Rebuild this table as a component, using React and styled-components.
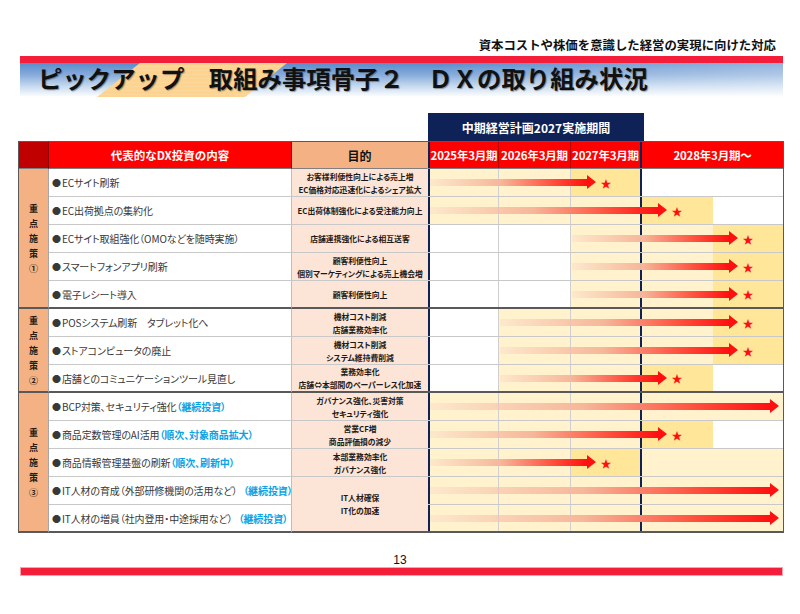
import React from 'react';
import styled, { createGlobalStyle } from 'styled-components';

const GlobalStyle = createGlobalStyle`
  html, body {
    margin: 0;
    padding: 0;
    background: #fff;
  }
  body {
    font-family: "Noto Sans CJK JP", "Noto Sans", sans-serif;
  }
`;

const NAVY = '#0f2257';
const GROUP_LINE = '#595959';

const Page = styled.div`
  width: 800px;
  height: 614px;
  overflow: hidden;
  background: #fff;
`;

const Subtitle = styled.div`
  margin: 37px 24px 0 0;
  text-align: right;
  font-size: 12.4px;
  font-weight: 700;
  line-height: 16px;
  color: #111;
`;

const RedBar = styled.div`
  margin: ${(p) => p.$top || 0}px 17px 0 20px;
  height: ${(p) => p.$h}px;
  box-sizing: border-box;
  background: #f41e3b;
  border: 1px solid ${(p) => (p.$soft ? '#f9a3ae' : '#f41e3b')};
`;

const TitleBand = styled.div`
  position: relative;
  margin: 0 17px 0 20px;
  height: 34px;
  background:
    linear-gradient(90deg, rgba(255, 255, 255, 0) 55%, rgba(255, 255, 255, 0.35) 100%),
    linear-gradient(180deg, #5a8bcb 0%, #86acdb 35%, #c9dcf0 70%, #ffffff 100%);
`;

const Stripe = styled.div`
  position: absolute;
  top: 0;
  bottom: 0;
  left: 77px;
  width: 190px;
  background: repeating-linear-gradient(180deg, #fdd38f 0px, #fdd38f 3px, #fcdca6 4px);
  clip-path: polygon(43px 0, 190px 0, 148px 100%, 0 100%);
`;

const Title = styled.h1`
  position: relative;
  margin: 0;
  padding-left: 18px;
  font-size: 24.4px;
  font-weight: 700;
  line-height: 30px;
  color: #111;
  white-space: nowrap;
  text-shadow: 1px 1px 1px rgba(0, 0, 0, 0.35);
`;

const PeriodBox = styled.div`
  margin: 16px 0 0 428px;
  width: 216px;
  height: 28px;
  display: flex;
  align-items: center;
  justify-content: center;
  background: ${NAVY};
  color: #fff;
  font-size: 12px;
  font-weight: 700;
`;

const Table = styled.div`
  margin-left: 18px;
  display: grid;
  grid-template-columns: 30px 243px 136px 355px;
  grid-template-rows: 27px repeat(13, 28px);
  border: 1px solid ${GROUP_LINE};
  border-bottom: none;
  width: 764px;
`;

const HeadCell = styled.div`
  box-sizing: border-box;
  display: flex;
  align-items: center;
  justify-content: center;
  background: ${(p) => p.$bg};
  color: ${(p) => p.$color || '#fff'};
  font-size: ${(p) => p.$size || 11.5}px;
  font-weight: 700;
  white-space: nowrap;
  border-right: 1px solid ${(p) => p.$line || '#a80000'};
  border-bottom: 1px solid #7f7f7f;
`;

const YearHeads = styled.div`
  display: grid;
  grid-template-columns: 71px 72px 71px 141px;
  border-bottom: 1px solid #7f7f7f;
  box-sizing: border-box;
`;

const YearHead = styled.div`
  box-sizing: border-box;
  display: flex;
  align-items: center;
  justify-content: center;
  background: #ff0000;
  color: #fff;
  font-size: 11.5px;
  font-weight: 700;
  white-space: nowrap;
  letter-spacing: -0.2px;
  border-left: ${(p) => (p.$first ? `2px solid ${NAVY}` : 'none')};
  border-right: ${(p) => p.$right};
`;

const GroupLabel = styled.div`
  grid-column: 1;
  grid-row: span ${(p) => p.$span};
  box-sizing: border-box;
  display: flex;
  flex-direction: column;
  align-items: center;
  justify-content: center;
  background: #f4b183;
  border-right: 1px solid #a6a6a6;
  border-bottom: 2px solid ${GROUP_LINE};
  font-size: 9px;
  font-weight: 700;
  line-height: 15px;
  color: #2b1a10;
`;

const rowLine = (p) => (p.$end ? `2px solid ${GROUP_LINE}` : '1px solid #c8c8c8');

const ContentCell = styled.div`
  grid-column: 2;
  box-sizing: border-box;
  display: flex;
  align-items: center;
  padding-left: 3px;
  background: #fff;
  border-right: 1px solid #bfbfbf;
  border-bottom: ${rowLine};
  font-size: 10px;
  letter-spacing: -0.1px;
  color: #383838;
  white-space: nowrap;
  font-feature-settings: "palt";
`;

const Bullet = styled.span`
  margin-right: 1px;
  font-size: 9px;
`;

const Note = styled.span`
  color: #0aa3e6;
  font-weight: 700;
  margin-left: ${(p) => p.$gap || 0}px;
`;

const PurposeCell = styled.div`
  grid-column: 3;
  grid-row: span ${(p) => p.$span || 1};
  box-sizing: border-box;
  display: flex;
  flex-direction: column;
  align-items: center;
  justify-content: center;
  background: #fce4d6;
  border-bottom: ${rowLine};
  font-size: 7.8px;
  font-weight: 700;
  line-height: 13px;
  color: #1a1a1a;
  white-space: nowrap;
  font-feature-settings: "palt";
`;

const GanttRow = styled.div`
  grid-column: 4;
  position: relative;
  box-sizing: border-box;
  display: grid;
  grid-template-columns: 71px 72px 71px 71px 70px;
  border-bottom: ${rowLine};
`;

const tones = { L: '#fff2cc', D: '#ffe699', W: '#ffffff' };
const colRight = [
  '1px solid #cfcfcf',
  '1px solid #cfcfcf',
  `2px solid ${NAVY}`,
  'none',
  'none',
];

const Shade = styled.div`
  box-sizing: border-box;
  background: ${(p) => tones[p.$tone]};
  border-left: ${(p) => (p.$col === 0 ? `2px solid ${NAVY}` : 'none')};
  border-right: ${(p) => colRight[p.$col]};
`;

const Arrow = styled.div`
  position: absolute;
  top: 50%;
  height: 7px;
  margin-top: -3.5px;
  background: linear-gradient(90deg, rgba(250, 214, 204, 0.35) 0%, #f6b79a 45%, #ff4a3a 80%, #ff1010 100%);
  &::after {
    content: '';
    position: absolute;
    right: -9px;
    top: 50%;
    margin-top: -7.5px;
    border-left: 9px solid #ff1010;
    border-top: 7.5px solid transparent;
    border-bottom: 7.5px solid transparent;
  }
`;

const Star = styled.span`
  position: absolute;
  top: 50%;
  transform: translate(-50%, -50%);
  color: #ff1010;
  font-size: 11px;
  line-height: 1;
`;

const PageNum = styled.div`
  margin-top: 20px;
  text-align: center;
  font-family: "Liberation Sans", Arial, sans-serif;
  font-size: 12px;
  line-height: 14px;
  color: #111;
`;

const START = [2, 72, 144];
const TIP = { y27: 168, y28a: 239, y28b: 310, full: 351 };

const groups = [
  {
    mark: '①',
    rows: [
      { text: 'ECサイト刷新', purpose: ['お客様利便性向上による売上増', 'EC価格対応迅速化によるシェア拡大'], shade: 'LLDWW', from: 0, to: 'y27', star: true },
      { text: 'EC出荷拠点の集約化', purpose: ['EC出荷体制強化による受注能力向上'], shade: 'LLLDW', from: 0, to: 'y28a', star: true },
      { text: 'ECサイト取組強化（OMOなどを随時実施）', purpose: ['店舗連携強化による相互送客'], shade: 'WWLLD', from: 2, to: 'y28b', star: true },
      { text: 'スマートフォンアプリ刷新', purpose: ['顧客利便性向上', '個別マーケティングによる売上機会増'], shade: 'WWLLD', from: 2, to: 'y28b', star: true },
      { text: '電子レシート導入', purpose: ['顧客利便性向上'], shade: 'WWLLD', from: 2, to: 'y28b', star: true },
    ],
  },
  {
    mark: '②',
    rows: [
      { text: 'POSシステム刷新　タブレット化へ', purpose: ['機材コスト削減', '店舗業務効率化'], shade: 'WLLLD', from: 1, to: 'y28b', star: true },
      { text: 'ストアコンピュータの廃止', purpose: ['機材コスト削減', 'システム維持費削減'], shade: 'WLLLD', from: 1, to: 'y28b', star: true },
      { text: '店舗とのコミュニケーションツール見直し', purpose: ['業務効率化', '店舗⇔本部間のペーパーレス化加速'], shade: 'WLLDW', from: 1, to: 'y28a', star: true },
    ],
  },
  {
    mark: '③',
    rows: [
      { text: 'BCP対策、セキュリティ強化', note: '（継続投資）', purpose: ['ガバナンス強化、災害対策', 'セキュリティ強化'], shade: 'LLLLL', from: 0, to: 'full' },
      { text: '商品定数管理のAI活用', note: '（順次、対象商品拡大）', purpose: ['営業CF増', '商品評価損の減少'], shade: 'LLLDW', from: 0, to: 'y28a', star: true },
      { text: '商品情報管理基盤の刷新', note: '（順次、刷新中）', purpose: ['本部業務効率化', 'ガバナンス強化'], shade: 'LLDLL', from: 0, to: 'y27', star: true },
      { text: 'IT人材の育成（外部研修機関の活用など）', note: '（継続投資）', gap: 6, purpose: ['IT人材確保', 'IT化の加速'], span: 2, shade: 'LLLLL', from: 0, to: 'full' },
      { text: 'IT人材の増員（社内登用・中途採用など）', note: '（継続投資）', gap: 6, merged: true, shade: 'LLLLL', from: 0, to: 'full' },
    ],
  },
];

const years = ['2025年3月期', '2026年3月期', '2027年3月期', '2028年3月期～'];

const PlanRow = ({ row, end, groupEnd }) => {
  const left = START[row.from];
  const tip = TIP[row.to];
  return (
    <>
      <ContentCell $end={end}>
        <Bullet>●</Bullet>
        {row.text}
        {row.note && <Note $gap={row.gap}>{row.note}</Note>}
      </ContentCell>
      {!row.merged && (
        <PurposeCell $span={row.span} $end={row.span ? groupEnd : end}>
          {row.purpose.map((line) => (
            <span key={line}>{line}</span>
          ))}
        </PurposeCell>
      )}
      <GanttRow $end={end}>
        {row.shade.split('').map((tone, i) => (
          <Shade key={i} $tone={tone} $col={i} />
        ))}
        <Arrow style={{ left, width: tip - 9 - left }} />
        {row.star && <Star style={{ left: tip + 10 }}>★</Star>}
      </GanttRow>
    </>
  );
};

const App = () => (
  <Page>
    <GlobalStyle />
    <Subtitle>資本コストや株価を意識した経営の実現に向けた対応</Subtitle>
    <RedBar $top={3} $h={7} />
    <TitleBand>
      <Stripe />
      <Title>ピックアップ　取組み事項骨子２　ＤＸの取り組み状況</Title>
    </TitleBand>
    <PeriodBox>中期経営計画2027実施期間</PeriodBox>
    <Table>
      <HeadCell $bg="#c00000" $line="#8a0000" />
      <HeadCell $bg="#ff0000">代表的なDX投資の内容</HeadCell>
      <HeadCell $bg="#f4b183" $color="#111" $size={12} $line="#f4b183">目的</HeadCell>
      <YearHeads>
        {years.map((y, i) => (
          <YearHead
            key={y}
            $first={i === 0}
            $right={i === 2 ? `2px solid ${NAVY}` : i < 2 ? '1px solid #b80000' : 'none'}
          >
            {y}
          </YearHead>
        ))}
      </YearHeads>
      {groups.map((g) => (
        <React.Fragment key={g.mark}>
          <GroupLabel $span={g.rows.length}>
            {['重', '点', '施', '策', g.mark].map((c) => (
              <span key={c}>{c}</span>
            ))}
          </GroupLabel>
          {g.rows.map((row, i) => (
            <PlanRow
              key={row.text}
              row={row}
              end={i === g.rows.length - 1}
              groupEnd={i + (row.span || 1) === g.rows.length}
            />
          ))}
        </React.Fragment>
      ))}
    </Table>
    <PageNum>13</PageNum>
    <RedBar $h={9} $soft />
  </Page>
);

export default App;
